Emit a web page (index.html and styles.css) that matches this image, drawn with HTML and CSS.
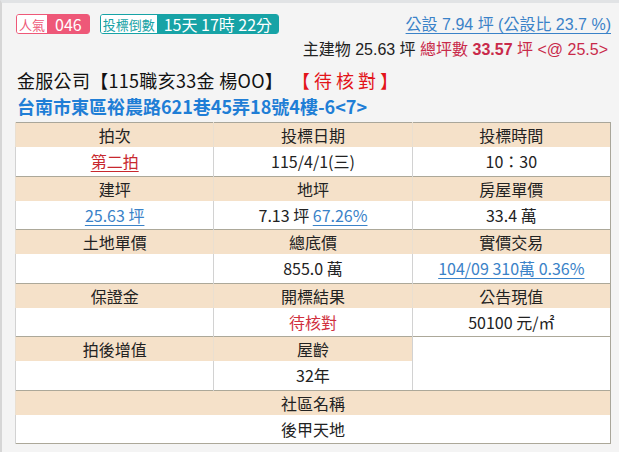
FILE: index.html
```html
<!DOCTYPE html>
<html lang="zh-Hant">
<head>
<meta charset="utf-8">
<link rel="stylesheet" href="styles.css">
</head>
<body>
<div class="page">
  <div class="top">
    <div class="badges">
      <span class="badge pink"><span class="lbl">人氣</span><span class="val">046</span></span>
      <span class="badge teal"><span class="lbl">投標倒數</span><span class="val">15天 17時 22分</span></span>
    </div>
    <div class="info">
      <div class="line1"><a class="blue-link">公設 7.94 坪 (公設比 23.7 %)</a></div>
      <div class="line2">主建物 25.63 坪 <span class="crim">總坪數 <b>33.57</b> 坪 &lt;@ 25.5&gt;</span></div>
    </div>
  </div>
  <div class="title">金服公司【115職亥33金 楊OO】<span class="status">【待核對】</span></div>
  <div class="addr">台南市東區裕農路621巷45弄18號4樓-6&lt;7&gt;</div>
  <table class="grid">
    <tr class="hd"><th>拍次</th><th>投標日期</th><th>投標時間</th></tr>
    <tr class="dt"><td><a class="red-link">第二拍</a></td><td>115/4/1(三)</td><td>10：30</td></tr>
    <tr class="hd"><th>建坪</th><th>地坪</th><th>房屋單價</th></tr>
    <tr class="dt"><td><a class="blue-link">25.63 坪</a></td><td>7.13 坪 <a class="blue-link">67.26%</a></td><td>33.4 萬</td></tr>
    <tr class="hd"><th>土地單價</th><th>總底價</th><th>實價交易</th></tr>
    <tr class="dt"><td></td><td>855.0 萬</td><td><a class="blue-link">104/09 310萬 0.36%</a></td></tr>
    <tr class="hd"><th>保證金</th><th>開標結果</th><th>公告現值</th></tr>
    <tr class="dt"><td></td><td class="crim2">待核對</td><td>50100 元/㎡</td></tr>
    <tr class="hd"><th>拍後增值</th><th>屋齡</th><td class="blank" rowspan="2"></td></tr>
    <tr class="dt"><td></td><td>32年</td></tr>
    <tr class="hd"><th colspan="3">社區名稱</th></tr>
    <tr class="dt"><td colspan="3">後甲天地</td></tr>
  </table>
</div>
</body>
</html>
```

FILE: styles.css
```css
html, body {
  margin: 0;
  padding: 0;
}
body {
  background: #f4f4f4;
  font-family: "Noto Sans CJK TC", "Noto Sans", sans-serif;
  color: #222;
  width: 619px;
  height: 452px;
  overflow: hidden;
}
.page {
  border-top: 3px solid #e1e3e5;
  border-left: 2px solid #d6d6d6;
  padding: 11px 8px 0 13px;
  height: 452px;
  box-sizing: border-box;
}
.top {
  display: flex;
  justify-content: space-between;
  align-items: flex-start;
}
.badges {
  display: flex;
  gap: 10px;
  padding-left: 1px;
}
.badge {
  display: inline-flex;
  align-items: stretch;
  height: 20px;
  border: 1px solid;
  border-radius: 3px;
  box-sizing: border-box;
}
.badge .lbl {
  display: flex;
  align-items: center;
  background: #fff;
  font-size: 13px;
  line-height: 1;
  padding: 0 2px;
  border-radius: 2px 0 0 2px;
}
.badge .val {
  display: flex;
  align-items: center;
  color: #fff;
  font-size: 16px;
  line-height: 1;
  border-radius: 0 1px 1px 0;
}
.badge.pink { border-color: #ee5878; }
.badge.pink .lbl { color: #ee5878; }
.badge.pink .val { background: #ee5878; padding: 0 7px 0 8px; }
.badge.teal { border-color: #17a3a6; }
.badge.teal .lbl { color: #17a3a6; }
.badge.teal .val { background: #17a3a6; padding: 0 6px 0 7px; font-size: 16px; }

.info {
  text-align: right;
  font-family: "Liberation Sans", "Noto Sans CJK TC", sans-serif;
  font-size: 16px;
}
.line1 {
  line-height: 20px;
  margin-top: 1px;
}
.line2 {
  line-height: 20px;
  margin-top: 5px;
  margin-right: 3px;
}
.blue-link {
  color: #3a82c8;
  text-decoration: underline;
  text-underline-offset: 3px;
}
.red-link {
  color: #c8282e;
  text-decoration: underline;
  text-underline-offset: 3px;
}
.crim { color: #c92a4a; }
.crim b { font-weight: bold; }

.title {
  font-size: 18px;
  line-height: 24px;
  margin-top: 8px;
  padding-left: 2px;
  color: #111;
  letter-spacing: 0.3px;
}
.status {
  color: #e3141a;
  margin-left: 18px;
  letter-spacing: 4px;
}
.addr {
  font-size: 18px;
  line-height: 24px;
  font-weight: bold;
  color: #1f7ed6;
  padding-left: 2px;
  margin-top: 2px;
}

.grid {
  margin-top: 4px;
  width: 596px;
  border-collapse: collapse;
  table-layout: fixed;
  border: 1px solid #a9a69a;
  background: #fff;
  font-size: 16px;
  text-align: center;
}
.grid th, .grid td {
  padding: 0;
  font-weight: normal;
  color: #222;
}
.grid tr.hd { height: 24px; }
.grid tr.hd th {
  background: #f5e1c9;
  border-left: 1px solid #eadfd0;
  line-height: 24px;
}
.grid tr.dt { height: 29px; border-bottom: 1px solid #aca899; }
.grid tr.dt td {
  border-left: 1px solid #d2d2d2;
  line-height: 28px;
}
.grid td.blank {
  background: #fff;
  border-left: 1px solid #d2d2d2;
  border-bottom: 1px solid #aca899;
}
.grid td.crim2 { color: #d0303e; }
```
